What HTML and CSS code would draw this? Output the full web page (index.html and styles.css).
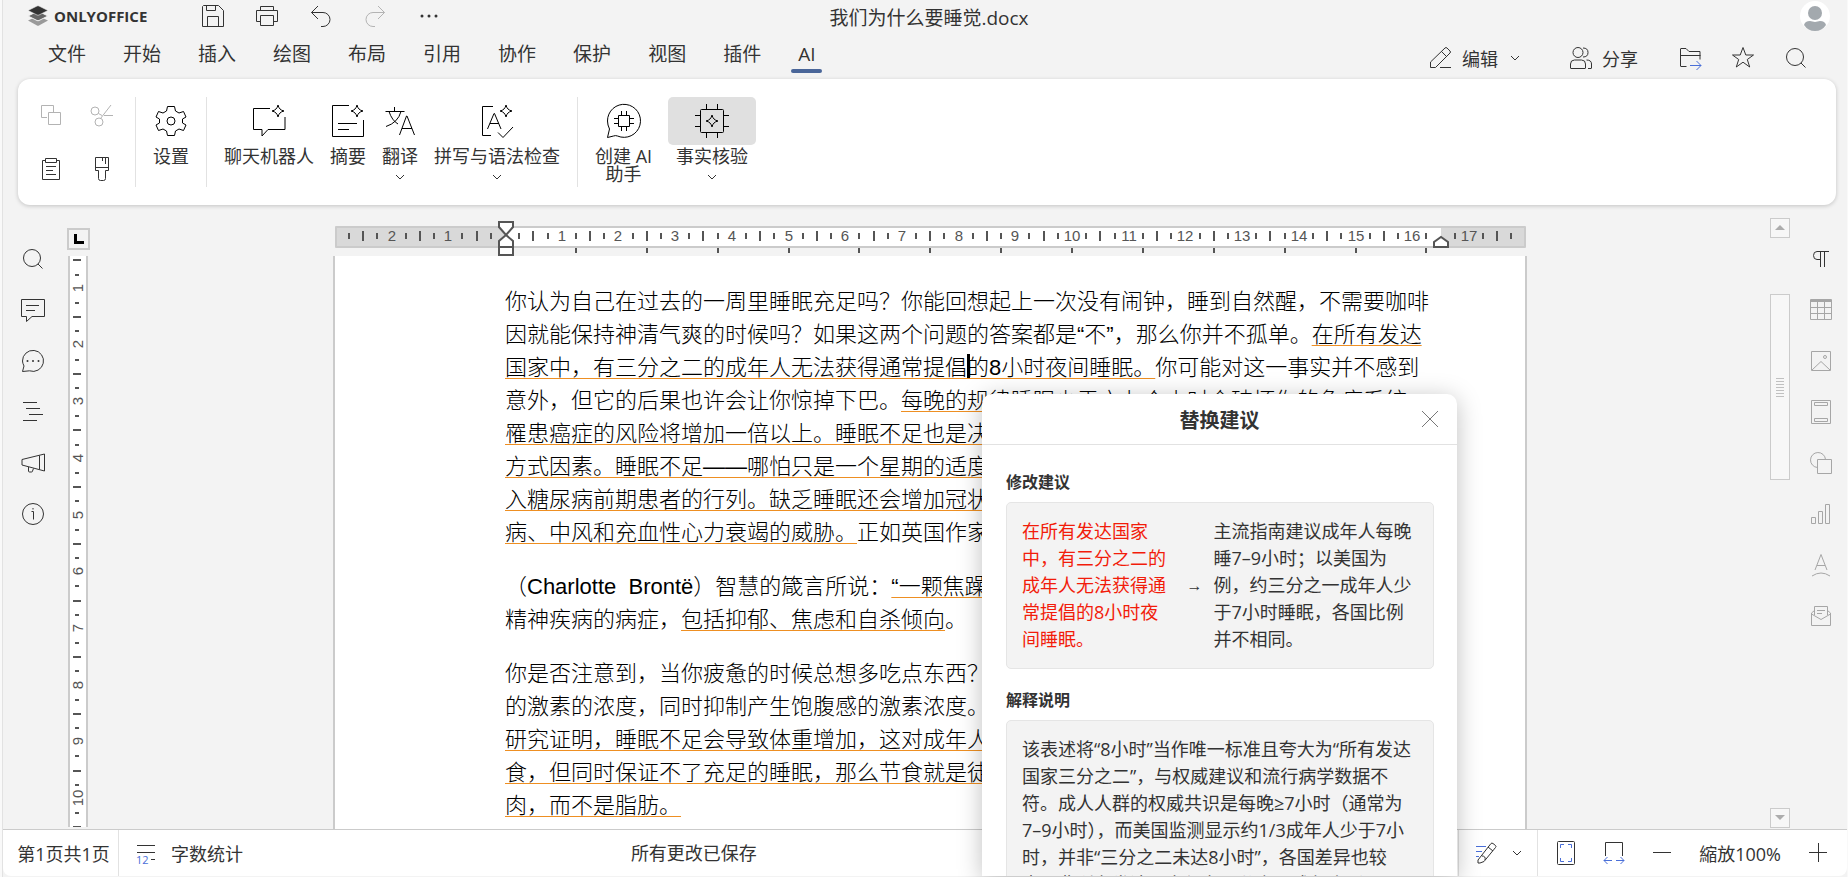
FILE: index.html
```html
<!DOCTYPE html>
<html lang="zh-CN">
<head>
    <meta charset="UTF-8">
    <meta name="viewport" content="width=device-width, initial-scale=1.0">
    <title>我们为什么要睡觉.docx</title>
    <link rel="stylesheet" href="styles.css">
</head>
<body>
<!-- shared shapes -->
<svg class="defs" aria-hidden="true">
    <symbol id="chevron" viewBox="0 0 12 12"><path d="M2 4l4 4 4-4"/></symbol>
    <symbol id="spark" viewBox="0 0 14 14"><path d="M7 1c.8 3.500 2.500 5.200 6 6-3.500.8-5.200 2.500-6 6-.8-3.500-2.500-5.200-6-6 3.500-.8 5.200-2.500 6-6z"/></symbol>
    <symbol id="search" viewBox="0 0 24 24"><circle cx="11" cy="11" r="8.500"/><path d="M17 17l4.500 4.500"/></symbol>
</svg>
<div class="app">
    <header class="header">
        <div class="topbar">
            <div class="top-left">
                <div class="logo">
                    <svg width="20" height="22" viewBox="0 0 20 22">
                        <path d="M0 15.500L10 11l10 4.500L11 20.500q-1 .5-2 0z" fill="#9a9a9a"/>
                        <path d="M0 11L10 6l10 5-9 4.500q-1 .5-2 0z" fill="#666" stroke="#f3f3f3"/>
                        <path d="M0 5.500L9 1q1-.5 2 0l9 4.500-9 4.500q-1 .5-2 0z" fill="#333" stroke="#f3f3f3" stroke-width=".6"/>
                    </svg>
                    <span>ONLYOFFICE</span>
                </div>
                <div class="quick">
                    <button aria-label="保存"><svg width="24" height="24"><path d="M2.500 1.500h15l5 5v16h-21v-20zM5.500 1.500v5h9v-5M6.500 22.500v-10h11v10"/></svg></button>
                    <button aria-label="打印"><svg width="24" height="24"><path d="M5.500 6.500v-4h13v4M5.500 17.500h-4v-11h21v11h-4M5.500 11.500h13v10h-13z"/></svg></button>
                    <button aria-label="撤销"><svg width="24" height="24"><path d="M9 2L2.500 8.500 9 15M2.500 8.500H14a7 7 0 0 1 0 14h-2"/></svg></button>
                    <button aria-label="重做" class="off"><svg width="24" height="24"><path d="M15 2l6.500 6.500L15 15M21.500 8.500H10a7 7 0 0 0 0 14h2"/></svg></button>
                    <button aria-label="更多"><svg width="24" height="24"><g class="solid"><circle cx="5" cy="12" r="1.500"/><circle cx="12" cy="12" r="1.500"/><circle cx="19" cy="12" r="1.500"/></g></svg></button>
                </div>
            </div>
            <h1 class="doc-title">我们为什么要睡觉.docx</h1>
            <button class="avatar" aria-label="账户">
                <svg width="30" height="30"><g class="person"><circle cx="15" cy="15" r="15" fill="#fff"/><circle cx="15" cy="12" r="7"/><path d="M4 24q1-4 6-4l5 1 5-1q5 0 6 4-4 6-11 6T4 24z"/></g></svg>
            </button>
        </div>
        <div class="tabrow">
            <nav class="tabs">
                <a href="#">文件</a>
                <a href="#">开始</a>
                <a href="#">插入</a>
                <a href="#">绘图</a>
                <a href="#">布局</a>
                <a href="#">引用</a>
                <a href="#">协作</a>
                <a href="#">保护</a>
                <a href="#">视图</a>
                <a href="#">插件</a>
                <a href="#" class="active">AI</a>
            </nav>
            <div class="actions">
                <button class="edit">
                    <svg width="24" height="24"><path d="M1.500 21.500v-5.500L16 2q1-1 2 0l3 3q1 1 0 2L6.500 21.500zM12.500 5.500l5 5M11 21.500h11"/></svg>
                    <span>编辑</span>
                    <svg class="arrow-down" width="12" height="12"><use href="#chevron"/></svg>
                </button>
                <button class="share">
                    <svg width="24" height="24"><circle cx="9" cy="6.500" r="5"/><path d="M14 2q5 0 5 4.500T14 11M1.500 22v-4q0-4 4-4h7q4 0 4 4v4q0 .5-.5.5H2q-.5 0-.5-.5zM17.500 14q5 0 5 4v4q0 .5-.5.5h-3"/></svg>
                    <span>分享</span>
                </button>
                <button class="sq" aria-label="打开文件位置"><svg width="24" height="24"><path d="M8.500 20.500H3q-.5 0-.5-.5V3q0-.5.5-.5h5l3 3h11v8M2.500 9.500h20"/><path class="blue" d="M12 19.500h11M18.500 15l4.500 4.500-4.500 4.500"/></svg></button>
                <button class="sq" aria-label="收藏"><svg width="24" height="24"><path d="M12 1.500l2.800 7.500h7.700l-6.200 4.500 2.400 7.500-6.700-4.800L5.300 21l2.400-7.500L1.500 9h7.700z"/></svg></button>
                <button class="sq" aria-label="搜索"><svg width="24" height="24"><use href="#search"/></svg></button>
            </div>
        </div>
    </header>

    <div class="toolbar">
        <div class="clip">
            <button class="off" aria-label="复制"><svg width="24" height="24"><path d="M8 14.500H2.500v-12h12V9M9.500 9.500h12v12h-12z"/></svg></button>
            <button class="off" aria-label="剪切"><svg width="24" height="24"><circle cx="5" cy="8" r="4"/><circle cx="9" cy="19" r="4"/><path d="M10.500 15.500L21 2M8.500 10.500L12 12.500M14 12.500h9"/></svg></button>
            <button aria-label="粘贴"><svg width="24" height="24"><path d="M6.500 3.500h-3v19h17v-19h-3M6.500 5.500v-4h11v4zM7 9.500h10M7 13.500h7M7 17.500h10"/></svg></button>
            <button aria-label="格式刷"><svg width="24" height="26"><path d="M5.500 1.500h13v13h-3v8q0 2-2 2h-3q-2 0-2-2v-8h-3zM5.500 11.500h13M12.500 2v3M15.500 2v6"/></svg></button>
        </div>
        <div class="group">
            <button class="tool">
                <span class="pic"><svg width="36" height="36"><path d="M14.500 3.500h7l1 4.500 3.500 2 4.500-1.500 2.500 5.500-3.500 2v4l3.500 2-2.500 5.500-4.500-1.500-3.500 2-1 4.500h-7l-1-4.500-3.500-2-4.500 1.500L3 22l3.500-2v-4L3 14l2.500-5.500L10 10l3.500-2z"/><circle cx="18" cy="18" r="4"/></svg></span>
                <span class="cap">设置</span>
            </button>
        </div>
        <div class="group">
            <button class="tool">
                <span class="pic"><svg width="36" height="36"><path d="M19 5.500H2.500v21h8.500V33l6-6.500h17V14"/><use href="#spark" x="20" y="1" width="14" height="14"/></svg></span>
                <span class="cap">聊天机器人</span>
            </button>
            <button class="tool">
                <span class="pic"><svg width="36" height="36"><path d="M19 2.500H2.500v31h31V17M8 20.500h19M8 26.500h11"/><use href="#spark" x="20" y="1" width="14" height="14"/></svg></span>
                <span class="cap">摘要</span>
            </button>
            <button class="tool">
                <span class="pic"><svg width="36" height="36"><path d="M3.500 8.500h19M12.500 4v4.500M19 8.500q-3 11-15 15M7 8.500q3 9 9 12.500M17.500 32l7-19h.5l7.500 19M20 25.500h10"/></svg></span>
                <span class="cap">翻译</span>
                <svg class="more" width="12" height="12"><use href="#chevron"/></svg>
            </button>
            <button class="tool">
                <span class="pic"><svg width="36" height="36"><path d="M14 3.500H3.500v29H12M8.500 26L15 10.500h.5L22 26M11 20.500h9M19 29.500l5 5 10-10.500"/><use href="#spark" x="20" y="1" width="14" height="14"/></svg></span>
                <span class="cap">拼写与语法检查</span>
                <svg class="more" width="12" height="12"><use href="#chevron"/></svg>
            </button>
        </div>
        <div class="group">
            <button class="tool">
                <span class="pic"><svg width="36" height="36"><path d="M1.500 34.500l2-8.500q-2-4-2-8a16.500 16.500 0 1 1 10 15q-2-.8-4 0zM12.500 12.500h11v11h-11zM15.500 8v4M20.500 8v4M15.500 24v4M20.500 24v4M8 15.500h4M8 20.500h4M24 15.500h4M24 20.500h4"/></svg></span>
                <span class="cap">创建 AI<br>助手</span>
            </button>
            <button class="tool pressed">
                <span class="pic"><svg width="36" height="36"><rect x="6.500" y="6.500" width="23" height="23" rx="1"/><path d="M12.500 1v5M23.500 1v5M12.500 30v5M23.500 30v5M1 12.500h5M1 23.500h5M30 12.500h5M30 23.500h5"/><use href="#spark" x="11" y="11" width="14" height="14"/></svg></span>
                <span class="cap">事实核验</span>
                <svg class="more" width="12" height="12"><use href="#chevron"/></svg>
            </button>
        </div>
    </div>

    <main class="work">
        <aside class="sidebar left">
            <button aria-label="查找"><svg width="24" height="24"><use href="#search"/></svg></button>
            <button aria-label="批注"><svg width="26" height="26"><path d="M1.500 2.500h23v17H12l-5.500 5v-5h-5zM6 8.500h13M6 13.500h9"/></svg></button>
            <button aria-label="聊天"><svg width="24" height="24"><path d="M1.500 22.500l1.500-5.500q-1.500-3-1.500-5a10.500 10.500 0 1 1 7 9.800z"/><g class="solid"><circle cx="6.500" cy="12" r="1"/><circle cx="12" cy="12" r="1"/><circle cx="17.500" cy="12" r="1"/></g></svg></button>
            <button aria-label="标题"><svg width="24" height="24"><path d="M2 2.500h14M5 8.500h14M8 14.500h14M2 20.500h14"/></svg></button>
            <button aria-label="反馈"><svg width="26" height="24"><path d="M2 8.500L24.500 3v17L2 14zM19.500 4.500v14M8.500 16v4q0 1 1 1h2q1 0 1-1l1-2.500"/></svg></button>
            <button aria-label="关于"><svg width="24" height="24"><circle cx="12" cy="12" r="10.500"/><path d="M10.500 9.500h2v8M12 6v1.500"/></svg></button>
        </aside>

        <div class="vruler">
            <button class="tabstop" aria-label="制表符"><svg width="12" height="12"><path d="M2.500 1v8.500H11"/></svg></button>
            <svg id="vruler" width="20" height="571"></svg>
        </div>

        <div class="canvas">
            <svg id="hruler" width="1194" height="51"></svg>
            <article class="page">
                <p>你认为自己在过去的一周里睡眠充足吗？你能回想起上一次没有闹钟，睡到自然醒，不需要咖啡<br>
                因就能保持神清气爽的时候吗？如果这两个问题的答案都是“不”，那么你并不孤单。<u>在所有发达<br>
                国家中，有三分之二的成年人无法获得通常提倡<span class="caret"></span>的8小时夜间睡眠。</u>你可能对这一事实并不感到<br>
                意外，但它的后果也许会让你惊掉下巴。<u>每晚的规律睡眠少于六七个小时会破坏你的免疫系统，<br>
                罹患癌症的风险将增加一倍以上。睡眠不足也是决定你是否会患上阿尔茨海默病的关键生活<br>
                方式因素。睡眠不足——哪怕只是一个星期的适度减少，都会扰乱血糖水平，甚至使你被归<br>
                入糖尿病前期患者的行列。缺乏睡眠还会增加冠状动脉阻塞和脆化的可能，带来心血管疾<br>
                病、中风和充血性心力衰竭的威胁。</u>正如英国作家夏洛蒂·勃朗特</p>
                <p>（Charlotte&nbsp; Brontë）智慧的箴言所说：<u>“一颗焦躁的心，难以安枕”，睡眠不足会加重<br></u>
                精神疾病的病症，<u>包括抑郁、焦虑和自杀倾向</u>。</p>
                <p>你是否注意到，当你疲惫的时候总想多吃点东西？睡眠太少会增加使你感到饥饿<br>
                的激素的浓度，同时抑制产生饱腹感的激素浓度。尽管吃饱了，你还是想要再吃。<br>
                <u>研究证明，睡眠不足会导致体重增加，这对成年人和儿童都一样。如果你想要节<br>
                食，但同时保证不了充足的睡眠，那么节食就是徒劳的，因为你减掉的大多是肌<br>
                肉，而不是脂肪。</u></p>
            </article>
        </div>

        <div class="scrollbar">
            <button aria-label="向上滚动"><svg width="10" height="6"><path d="M0 5l5-5 5 5z"/></svg></button>
            <div class="track"><div class="thumb"></div></div>
            <button aria-label="向下滚动"><svg width="10" height="6"><path d="M0 0l5 5 5-5z"/></svg></button>
        </div>

        <aside class="sidebar right">
            <button class="on" aria-label="段落"><svg width="24" height="24"><path d="M20 4.500H8q-3.500 0-3.500 4t3.500 4h3.500M11.500 4.500v15.500M15.500 4.500v15.500"/></svg></button>
            <button aria-label="表格"><svg width="24" height="24"><path d="M1.500 1.500h21v20h-21zM1.500 2.500h21M1.500 3.500h21M1.500 9.500h21M1.500 15.500h21M8.500 4v17M15.500 4v17"/></svg></button>
            <button aria-label="图片"><svg width="24" height="24"><path d="M2.500 2.500h19v19h-19zM3 21l9-8.500 9 8.500"/><circle cx="16" cy="8" r="1.500"/></svg></button>
            <button aria-label="页眉页脚"><svg width="24" height="26"><path d="M2.500 1.500h19v23h-19zM5.500 3.500h13v3h-13zM5.500 19.500h13v3h-13z"/></svg></button>
            <button aria-label="形状"><svg width="24" height="24"><path d="M8.500 8.500h14v14h-14zM8.500 16.500A7.500 7.500 0 1 1 16.500 8.500"/></svg></button>
            <button aria-label="图表"><svg width="24" height="24"><path d="M2.500 15.500h4v6h-4zM9.500 9.500h4v12h-4zM16.500 2.500h4v19h-4z"/></svg></button>
            <button aria-label="艺术字"><svg width="24" height="26"><path d="M6 18l6-15.500L18 18M8 13.500h8M3 24q9-6 18 0"/></svg></button>
            <button aria-label="邮件合并"><svg width="24" height="24"><path d="M5.500 11V2.500h13V11M2.500 9v12.500h19V9l-3-2.500M2.500 9l3-2.500M2.500 10l9.500 5.500 9.500-5.500M8 6.500h8M8 9.500h5"/></svg></button>
        </aside>
    </main>

    <footer class="status">
        <button class="pages">第1页共1页</button>
        <button class="count">
            <svg width="20" height="24" aria-hidden="true"><path d="M1 4.500h18M1 11.500h18M15 18.500h4"/><text x="0" y="23">12</text></svg>
            <span>字数统计</span>
        </button>
        <div class="saved">所有更改已保存</div>
        <button class="track-changes" aria-label="修订">
            <svg width="24" height="24"><path class="blue" d="M2 5.500h10M2 10.500h6M2 15.500h3"/><path d="M4 22v-3l11-14 2-2.500q.8-.8 2 0l2.500 2q1 1 0 2L10 20.500 6 22zM14 6l5 4M8 15q4 0 3 4"/></svg>
            <svg width="12" height="12"><use href="#chevron"/></svg>
        </button>
        <div class="zoom">
            <button aria-label="适合页面"><svg width="24" height="26"><rect x="3.500" y="1.500" width="17" height="23" rx="1"/><path class="blue" d="M6.500 8V4.500H10M14 4.500h3.500V8M6.500 18v3.500H10M14 21.500h3.500V18"/></svg></button>
            <button aria-label="适合宽度"><svg width="24" height="26"><path d="M3.500 16V2.500h17V16"/><path class="blue" d="M2 20.500h8M14 20.500h8M5.500 17L2 20.500 5.500 24M18.500 17l3.500 3.500-3.500 3.500"/></svg></button>
            <button aria-label="缩小"><svg width="24" height="24"><path d="M3 11.500h18"/></svg></button>
            <span class="level">縮放100%</span>
            <button aria-label="放大"><svg width="24" height="24"><path d="M3 11.500h18M12.500 2v19"/></svg></button>
        </div>
    </footer>

    <section class="dialog" role="dialog" aria-labelledby="dlgTitle">
        <header>
            <h2 id="dlgTitle">替换建议</h2>
            <button aria-label="关闭"><svg width="18" height="18"><path d="M1 1l16 16M17 1L1 17"/></svg></button>
        </header>
        <div class="content">
            <h3>修改建议</h3>
            <div class="box change">
                <p class="old">在所有发达国家中，有三分之二的成年人无法获得通常提倡的8小时夜间睡眠。</p>
                <span class="arrow">→</span>
                <p>主流指南建议成年人每晚睡7–9小时；以美国为例，约三分之一成年人少于7小时睡眠，各国比例并不相同。</p>
            </div>
            <h3>解释说明</h3>
            <div class="box">
                <p>该表述将“8小时”当作唯一标准且夸大为“所有发达国家三分之二”，与权威建议和流行病学数据不符。成人人群的权威共识是每晚≥7小时（通常为7–9小时），而美国监测显示约1/3成年人少于7小时，并非“三分之二未达8小时”，各国差异也较大，非所有发达国家都有三分之二成年人睡眠不足。</p>
            </div>
        </div>
    </section>
</div>

<script>
    // one centimetre on screen at 100% zoom
    const CM = 56.7;

    function drawHorizontal() {
        const zero = 172;
        let out = '<rect x="3" y="22" width="1189" height="20" fill="#d9d9d9" stroke="#cbcbcb" stroke-width="2"/>' +
            '<rect x="173" y="23" width="935" height="18" fill="#fff"/>';
        for (let i = -11; i < 72; i++) {
            const x = Math.round(zero + i * CM / 4);
            if (i === 0 || i === 66) continue;
            if (i % 4 === 0) {
                out += '<text x="' + x + '" y="36">' + Math.abs(i / 4) + '</text>';
            } else {
                const tall = i % 2 === 0;
                out += '<rect x="' + (x - 1) + '" y="' + (tall ? 26 : 28) + '" width="2" height="' + (tall ? 10 : 6) + '"/>';
            }
        }
        // default tab stops
        for (let i = 1; i < 14; i++) {
            out += '<rect x="' + Math.round(zero - 1 + i * CM * 1.25) + '" y="43" width="2" height="5"/>';
        }
        // indent handles
        out += '<path class="handle" d="M166 17h14v5l-7 8-7-8zM173 30l7 6v6h-14v-6zM166 42h14v8h-14z"/>';
        out += '<path class="handle" d="M1101 42v-5l7-5 7 5v5z"/>';
        document.getElementById('hruler').innerHTML = out;
    }

    function drawVertical() {
        let out = '<rect width="20" height="571" fill="#cbcbcb"/><rect x="2" width="16" height="571" fill="#fff"/>';
        for (let i = 2; i < 44; i++) {
            const y = Math.round(i * CM / 4) - 25;
            if (i % 4 === 0) {
                out += '<text transform="translate(15 ' + y + ') rotate(-90)">' + i / 4 + '</text>';
            } else {
                const wide = i % 2 === 0;
                out += '<rect x="' + (wide ? 5 : 7) + '" y="' + y + '" width="' + (wide ? 8 : 4) + '" height="2"/>';
            }
        }
        document.getElementById('vruler').innerHTML = out;
    }

    drawHorizontal();
    drawVertical();
</script>
</body>
</html>
```
FILE: styles.css
```css
* {
    box-sizing: border-box;
}
body {
    margin: 0;
    background: #f9f9f9;
    color: #333;
    font-family: "Open Sans", "Noto Sans CJK SC", sans-serif;
    font-size: 18px;
    overflow: hidden;
}
button {
    display: flex;
    align-items: center;
    justify-content: center;
    padding: 0;
    border: 0;
    background: none;
    color: inherit;
    font: inherit;
    white-space: nowrap;
}
a {
    color: inherit;
    text-decoration: none;
}
h1, h2, h3, p {
    margin: 0;
}
svg {
    display: block;
    flex: none;
    fill: none;
    stroke: #333;
    stroke-width: 1;
    stroke-linejoin: round;
}
.defs {
    position: absolute;
    width: 0;
    height: 0;
}
.solid {
    fill: #333;
    stroke: none;
}
.blue {
    stroke: #4a6fd8;
}
.off svg {
    stroke: #b3b3b3;
}

.app {
    position: relative;
    display: flex;
    flex-direction: column;
    height: 100vh;
    margin: 0 1px 0 2px;
    padding-bottom: 1px;
    border-left: 1px solid #e2e2e2;
    background: #f3f3f3;
    overflow: hidden;
}

/* header */
.topbar {
    display: grid;
    grid-template-columns: 1fr auto 1fr;
    align-items: center;
    height: 32px;
    padding: 0 17px 0 25px;
}
.top-left {
    display: flex;
    align-items: center;
}
.logo {
    display: flex;
    align-items: center;
    gap: 6px;
    width: 158px;
    font-size: 15px;
    font-weight: 700;
}
.logo svg {
    stroke: none;
}
.quick {
    display: flex;
}
.quick button {
    width: 54px;
    height: 32px;
}
.doc-title {
    padding-top: 2px;
    font-size: 19px;
    font-weight: 400;
}
.avatar {
    justify-self: end;
}
.person {
    fill: #a3a9ae;
    stroke: none;
}
.tabrow {
    display: flex;
    justify-content: space-between;
    height: 47px;
    padding-left: 45px;
}
.tabs {
    display: flex;
    gap: 37px;
    height: 43px;
    line-height: 45px;
    font-size: 19px;
}
.tabs .active {
    position: relative;
}
.tabs .active::after {
    content: "";
    position: absolute;
    left: -7px;
    right: -7px;
    bottom: 2px;
    height: 4px;
    border-radius: 2px;
    background: #4a6699;
}
.actions {
    display: flex;
    align-items: center;
    padding: 4px 25px 0 0;
}
.actions .edit,
.actions .share {
    gap: 9px;
}
.actions .edit {
    margin-right: 48px;
}
.actions .share {
    margin-right: 25px;
}
.actions .sq {
    width: 53px;
}
.arrow-down {
    margin-left: 2px;
}

/* toolbar */
.toolbar {
    display: flex;
    align-items: flex-start;
    height: 126px;
    margin: 0 11px 0 15px;
    padding: 9px 7px;
    border-radius: 12px;
    background: #fff;
    box-shadow: 0 1px 4px rgba(0, 0, 0, 0.2);
}
.clip {
    display: grid;
    grid-template-columns: 51px 51px;
    grid-template-rows: 54px 54px;
    margin-right: 8px;
}
.group {
    display: flex;
    height: 90px;
    margin-top: 9px;
    padding: 0 9px;
    border-left: 1px solid #e2e2e2;
}
.tool {
    flex-direction: column;
    justify-content: flex-start;
    padding: 0 8px;
}
.tool .pic {
    display: flex;
    align-items: center;
    justify-content: center;
    align-self: stretch;
    height: 48px;
    margin: 0 -8px 2px;
    border-radius: 5px;
}
.tool .pic svg {
    stroke: #000;
}
.tool .cap {
    line-height: 18px;
    text-align: center;
}
.tool .more {
    margin-top: 6px;
}
.tool.pressed {
    margin-left: 8px;
}
.pressed .pic {
    background: #e0e0e0;
}

/* work area */
.work {
    display: flex;
    flex: 1;
    min-height: 0;
}
.sidebar {
    padding-top: 28px;
}
.sidebar button {
    width: 100%;
    height: 51px;
}
.left {
    width: 60px;
    margin-right: 4px;
}
.right {
    width: 52px;
    margin-left: 5px;
}
.right svg {
    stroke: #a6a6a6;
}
.right .on svg {
    stroke: #333;
}
.vruler {
    width: 23px;
    padding-top: 23px;
}
.vruler > svg {
    margin-left: 1px;
}
.tabstop {
    width: 23px;
    height: 22px;
    margin-bottom: 6px;
    border: 2px solid #cbcbcb;
}
.tabstop svg {
    stroke: #000;
    stroke-width: 3;
    stroke-linejoin: miter;
}
#hruler, #vruler {
    fill: #555;
    stroke: none;
    font-family: "Liberation Sans", Arial, sans-serif;
    font-size: 15px;
    text-anchor: middle;
}
.handle {
    fill: #fff;
    stroke: #555;
    stroke-width: 2;
    stroke-linejoin: miter;
}
.canvas {
    display: flex;
    flex: 1;
    flex-direction: column;
    align-items: center;
    min-width: 0;
    overflow: hidden;
}
.page {
    flex: 1;
    width: 1194px;
    padding: 29px 84px 0 170px;
    border: solid #cbcbcb;
    border-width: 0 2px;
    background: #fff;
    color: #000;
    font-family: "Liberation Sans", "Noto Sans CJK SC", sans-serif;
    font-size: 22px;
    font-weight: 300;
    line-height: 33px;
    white-space: nowrap;
    overflow: hidden;
}
.page p {
    margin-bottom: 21px;
}
.page u {
    text-decoration: underline 1px #ee8f22;
    text-decoration-skip-ink: none;
    text-underline-offset: 3px;
}
.caret {
    display: inline-block;
    width: 3px;
    height: 24px;
    margin-right: -3px;
    background: #000;
    vertical-align: -3px;
}
.scrollbar {
    display: flex;
    flex-direction: column;
    width: 20px;
    padding: 13px 0 1px;
}
.scrollbar button {
    height: 20px;
    border: 1px solid #cbcbcb;
    background: #f7f7f7;
}
.scrollbar svg {
    fill: #adadad;
    stroke: none;
}
.track {
    flex: 1;
    padding-top: 56px;
}
.thumb {
    display: flex;
    align-items: center;
    justify-content: center;
    height: 186px;
    border: 1px solid #cbcbcb;
    background: #f7f7f7;
}
.thumb::before {
    content: "";
    width: 8px;
    height: 19px;
    background: repeating-linear-gradient(#c0c0c0 0 1px, transparent 1px 3px);
}

/* status bar */
.status {
    display: flex;
    height: 47px;
    border-top: 1px solid #cbcbcb;
    border-radius: 0 0 8px 8px;
    background: #fff;
}
.pages {
    width: 116px;
    padding-left: 6px;
    border-right: 1px solid #e2e2e2;
}
.count {
    gap: 15px;
    padding-left: 17px;
}
.count text {
    fill: #4a6fd8;
    stroke: none;
    font-size: 11px;
}
.saved {
    flex: 1;
    padding-right: 17%;
    line-height: 46px;
    text-align: center;
}
.track-changes {
    gap: 13px;
    width: 79px;
    border-left: 1px solid #e2e2e2;
}
.zoom {
    display: flex;
    align-items: center;
    gap: 24px;
    height: 46px;
    padding: 0 17px 0 16px;
    border-left: 1px solid #e2e2e2;
}
.level {
    padding: 0 1px;
}

/* suggestion window, lies over the document */
.dialog {
    position: absolute;
    top: 394px;
    right: 390px;
    bottom: 1px;
    width: 475px;
    border-radius: 10px 10px 0 0;
    background: #fff;
    box-shadow: 0 4px 24px rgba(0, 0, 0, 0.25);
    overflow: hidden;
}
.dialog header {
    display: grid;
    grid-template-columns: 1fr auto 1fr;
    align-items: center;
    height: 51px;
    padding: 0 18px;
    border-bottom: 1px solid #e2e2e2;
}
.dialog h2 {
    grid-column: 2;
    padding-top: 4px;
    font-size: 20px;
    line-height: 46px;
}
.dialog header button {
    justify-self: end;
}
.dialog header svg {
    stroke: #777;
}
.content {
    padding: 24px 23px 0 24px;
}
.dialog h3 {
    height: 33px;
    font-size: 16px;
    line-height: 26px;
}
.box {
    margin-bottom: 18px;
    padding: 15px;
    border: 1px solid #e5e5e5;
    border-radius: 5px;
    background: #f3f3f3;
    line-height: 27px;
}
.change {
    display: grid;
    grid-template-columns: 3fr 16px 4fr;
    gap: 11px;
    align-items: center;
}
.old {
    color: #f21c0a;
}
.arrow {
    font-family: "Liberation Sans", sans-serif;
    font-size: 16px;
}
```
